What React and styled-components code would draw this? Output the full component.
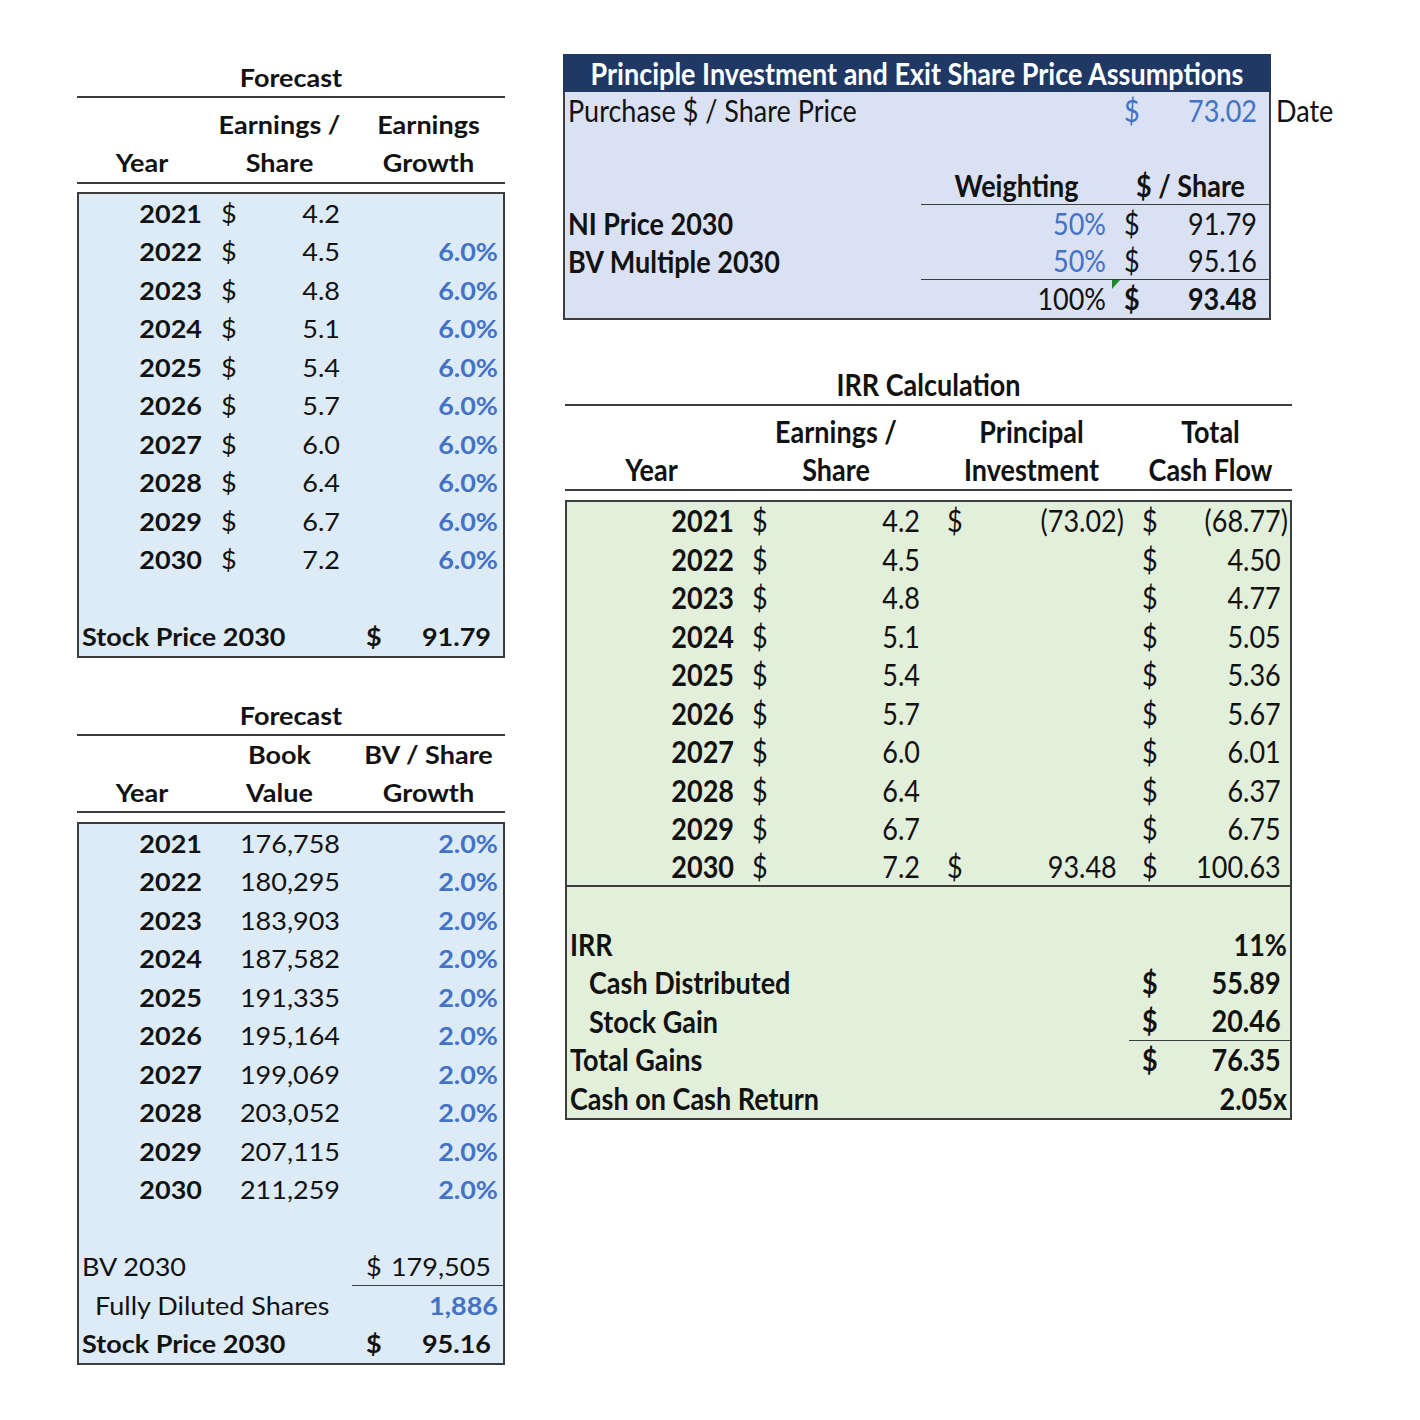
import React from 'react';
import styled, { createGlobalStyle, css } from 'styled-components';

const Global = createGlobalStyle`
  html, body { margin: 0; padding: 0; background: #ffffff; }
  body { font-family: Lato, "Open Sans", "Noto Sans", sans-serif; color: #111; }
`;

const BLUE = '#4472c4';
const INK = '#121212';
const RULE = '#3d3d3d';

const Page = styled.div`
  display: flex;
  align-items: flex-start;
  gap: 58px;
  padding: 54px 0 0 77px;
  width: 1420px;
  height: 1420px;
  box-sizing: border-box;
  font-size: 27px;
`;

const LeftCol = styled.div`
  width: 428px;
  padding-top: 4px;
  display: flex;
  flex-direction: column;
  --sy: 0.94;
`;

const RightCol = styled.div`
  display: flex;
  flex-direction: column;
  --sy: 1.12;
`;

const Ink = styled.span`
  display: inline-block;
  transform: scaleY(var(--sy, 1));
  white-space: pre;
`;

const Title = styled.div`
  height: 38px;
  display: flex;
  align-items: center;
  justify-content: center;
  font-weight: 700;
  color: ${INK};
  border-bottom: 2px solid ${RULE};
  margin-top: ${p => p.$gap || 0}px;
`;

const HeadBlock = styled.div`
  display: grid;
  grid-template-columns: ${p => p.$cols};
  padding-top: ${p => p.$pad}px;
  border-bottom: 2px solid ${RULE};
`;

const HeadCell = styled.div`
  display: flex;
  flex-direction: column;
  justify-content: flex-end;
  align-items: center;
  font-weight: 700;
  color: ${INK};
  line-height: ${p => p.$lh}px;
  height: ${p => p.$lh * 2}px;
`;

const HeadLine = styled.div`
  height: ${p => p.$lh}px;
  display: flex;
  align-items: center;
`;

const Box = styled.div`
  margin-top: ${p => p.$gap || 0}px;
  background: ${p => p.$bg};
  border: 2px solid ${RULE};
  width: ${p => p.$w}px;
  box-sizing: border-box;
  display: flex;
  flex-direction: column;
`;

const Row = styled.div`
  display: grid;
  grid-template-columns: ${p => p.$cols};
  height: ${p => p.$h || 38.5}px;
  box-sizing: border-box;
  ${p => p.$rule && css`border-bottom: 2px solid ${RULE};`}
`;

const Cell = styled.div`
  position: relative;
  display: flex;
  align-items: center;
  justify-content: ${p =>
    p.$a === 'left' ? 'flex-start' : p.$a === 'center' ? 'center' : p.$a === 'split' ? 'space-between' : 'flex-end'};
  padding: 0 ${p => p.$pr || 0}px 0 ${p => p.$pl || 0}px;
  grid-column: span ${p => p.$span || 1};
  font-weight: ${p => (p.$bold ? 700 : 400)};
  color: ${p => (p.$blue ? BLUE : INK)};
  box-sizing: border-box;
  min-width: 0;
  white-space: nowrap;
  ${p => p.$under && css`border-bottom: 1.5px solid ${RULE};`}
`;

const Paren = styled.span`
  visibility: ${p => (p.$show ? 'visible' : 'hidden')};
`;

const Flag = styled.span`
  position: absolute;
  left: 0;
  top: 0;
  width: 0;
  height: 0;
  border-top: 9px solid #1f8a2b;
  border-right: 8px solid transparent;
`;

const PanelWrap = styled.div`
  display: flex;
  align-items: flex-start;
`;

const Banner = styled.div`
  height: 38px;
  background: #203864;
  color: #ffffff;
  font-weight: 700;
  display: flex;
  align-items: center;
  justify-content: center;
  margin: -2px -2px 0;
`;

const SideNote = styled.div`
  padding-top: 38px;
  margin-left: 5px;
  height: 37.6px;
  display: flex;
  align-items: center;
  box-sizing: content-box;
  color: ${INK};
`;

const IrrWrap = styled.div`
  margin-left: 2px;
  width: 727px;
  display: flex;
  flex-direction: column;
`;

const T = ({ children }) => <Ink>{children}</Ink>;

/* ---------- data ---------- */
const years = [2021, 2022, 2023, 2024, 2025, 2026, 2027, 2028, 2029, 2030];
const eps = ['4.2', '4.5', '4.8', '5.1', '5.4', '5.7', '6.0', '6.4', '6.7', '7.2'];
const bv = ['176,758', '180,295', '183,903', '187,582', '191,335', '195,164', '199,069', '203,052', '207,115', '211,259'];
const total = ['(68.77)', '4.50', '4.77', '5.05', '5.36', '5.67', '6.01', '6.37', '6.75', '100.63'];
const principal = { 0: '(73.02)', 9: '93.48' };

const L_HEAD = '130px 145px 153px';
const L_BODY = '128px 145px 151px';
const P_COLS = '356px 191px 157px';
const I_HEAD = '173px 196px 195px 163px';
const I_BODY = '171px 196px 195px 161px';

const Acct = ({ v, bold, pl, pr, under }) => {
  const neg = v.startsWith('(');
  const num = neg ? v.slice(0, -1) : v;
  return (
    <Cell $a="split" $pl={pl} $pr={pr} $bold={bold} $under={under}>
      <T>$</T>
      <T>
        {num}
        <Paren $show={neg}>)</Paren>
      </T>
    </Cell>
  );
};

const Head = ({ cols, pad, lh, items }) => (
  <HeadBlock $cols={cols} $pad={pad}>
    {items.map((it, i) => (
      <HeadCell key={i} $lh={lh}>
        <HeadLine $lh={lh}>
          <T>{it[0]}</T>
        </HeadLine>
        <HeadLine $lh={lh}>
          <T>{it[1]}</T>
        </HeadLine>
      </HeadCell>
    ))}
  </HeadBlock>
);

const EarningsTable = () => (
  <>
    <Title>
      <T>Forecast</T>
    </Title>
    <Head cols={L_HEAD} pad={8} lh={38} items={[['', 'Year'], ['Earnings /', 'Share'], ['Earnings', 'Growth']]} />
    <Box $gap={8} $w={428} $bg="#ddebf7">
      {years.map((y, i) => (
        <Row key={y} $cols={L_BODY}>
          <Cell $bold $pr={5}>
            <T>{y}</T>
          </Cell>
          <Cell $a="split" $pl={14} $pr={12}>
            <T>$</T>
            <T>{eps[i]}</T>
          </Cell>
          <Cell $blue $bold $pr={5}>
            <T>{i === 0 ? '' : '6.0%'}</T>
          </Cell>
        </Row>
      ))}
      <Row $cols={L_BODY} />
      <Row $cols={L_BODY}>
        <Cell $a="left" $span={2} $pl={3} $bold>
          <T>Stock Price 2030</T>
        </Cell>
        <Cell $a="split" $pl={14} $pr={12} $bold>
          <T>$</T>
          <T>91.79</T>
        </Cell>
      </Row>
    </Box>
  </>
);

const BookTable = () => (
  <>
    <Title $gap={38}>
      <T>Forecast</T>
    </Title>
    <Head cols={L_HEAD} pad={0} lh={37.5} items={[['', 'Year'], ['Book', 'Value'], ['BV / Share', 'Growth']]} />
    <Box $gap={9} $w={428} $bg="#ddebf7">
      {years.map((y, i) => (
        <Row key={y} $cols={L_BODY}>
          <Cell $bold $pr={5}>
            <T>{y}</T>
          </Cell>
          <Cell $pr={12}>
            <T>{bv[i]}</T>
          </Cell>
          <Cell $blue $bold $pr={5}>
            <T>2.0%</T>
          </Cell>
        </Row>
      ))}
      <Row $cols={L_BODY} />
      <Row $cols={L_BODY}>
        <Cell $a="left" $span={2} $pl={3}>
          <T>BV 2030</T>
        </Cell>
        <Cell $a="split" $pl={14} $pr={12} $under>
          <T>$</T>
          <T>179,505</T>
        </Cell>
      </Row>
      <Row $cols={L_BODY}>
        <Cell $a="left" $span={2} $pl={16}>
          <T>Fully Diluted Shares</T>
        </Cell>
        <Cell $blue $bold $pr={5}>
          <T>1,886</T>
        </Cell>
      </Row>
      <Row $cols={L_BODY}>
        <Cell $a="left" $span={2} $pl={3} $bold>
          <T>Stock Price 2030</T>
        </Cell>
        <Cell $a="split" $pl={14} $pr={12} $bold>
          <T>$</T>
          <T>95.16</T>
        </Cell>
      </Row>
    </Box>
  </>
);

const PR = 37.6;

const AssumptionsPanel = () => (
  <PanelWrap>
    <Box $w={708} $bg="#d9e1f2">
      <Banner>
        <T>Principle Investment and Exit Share Price Assumptions</T>
      </Banner>
      <Row $cols={P_COLS} $h={PR}>
        <Cell $a="left" $pl={3}>
          <T>Purchase $ / Share Price</T>
        </Cell>
        <Cell />
        <Cell $a="split" $pl={12} $pr={12} $blue>
          <T>$</T>
          <T>73.02</T>
        </Cell>
      </Row>
      <Row $cols={P_COLS} $h={PR} />
      <Row $cols={P_COLS} $h={PR}>
        <Cell />
        <Cell $a="center" $bold $under>
          <T>Weighting</T>
        </Cell>
        <Cell $a="center" $bold $under>
          <T>$ / Share</T>
        </Cell>
      </Row>
      <Row $cols={P_COLS} $h={PR}>
        <Cell $a="left" $pl={3} $bold>
          <T>NI Price 2030</T>
        </Cell>
        <Cell $blue $pr={6}>
          <T>50%</T>
        </Cell>
        <Cell $a="split" $pl={12} $pr={12}>
          <T>$</T>
          <T>91.79</T>
        </Cell>
      </Row>
      <Row $cols={P_COLS} $h={PR}>
        <Cell $a="left" $pl={3} $bold>
          <T>BV Multiple 2030</T>
        </Cell>
        <Cell $blue $pr={6} $under>
          <T>50%</T>
        </Cell>
        <Cell $a="split" $pl={12} $pr={12} $under>
          <T>$</T>
          <T>95.16</T>
        </Cell>
      </Row>
      <Row $cols={P_COLS} $h={PR}>
        <Cell />
        <Cell $pr={6}>
          <T>100%</T>
        </Cell>
        <Cell $a="split" $pl={12} $pr={12} $bold>
          <Flag />
          <T>$</T>
          <T>93.48</T>
        </Cell>
      </Row>
    </Box>
    <SideNote>
      <T>Date</T>
    </SideNote>
  </PanelWrap>
);

const IrrTable = () => (
  <IrrWrap>
    <Title $gap={46}>
      <T>IRR Calculation</T>
    </Title>
    <Head
      cols={I_HEAD}
      pad={7}
      lh={38}
      items={[['', 'Year'], ['Earnings /', 'Share'], ['Principal', 'Investment'], ['Total', 'Cash Flow']]}
    />
    <Box $gap={9} $w={727} $bg="#e2efda">
      {years.map((y, i) => (
        <Row key={y} $cols={I_BODY} $rule={i === 9}>
          <Cell $bold $pr={4}>
            <T>{y}</T>
          </Cell>
          <Cell $a="split" $pl={14} $pr={14}>
            <T>$</T>
            <T>{eps[i]}</T>
          </Cell>
          {principal[i] ? <Acct v={principal[i]} pl={13} pr={5} /> : <Cell />}
          <Acct v={total[i]} pl={13} pr={2} />
        </Row>
      ))}
      <Row $cols={I_BODY} />
      <Row $cols={I_BODY}>
        <Cell $a="left" $span={3} $pl={3} $bold>
          <T>IRR</T>
        </Cell>
        <Cell $bold $pr={3}>
          <T>11%</T>
        </Cell>
      </Row>
      <Row $cols={I_BODY}>
        <Cell $a="left" $span={3} $pl={22} $bold>
          <T>Cash Distributed</T>
        </Cell>
        <Acct v="55.89" bold pl={13} pr={2} />
      </Row>
      <Row $cols={I_BODY}>
        <Cell $a="left" $span={3} $pl={22} $bold>
          <T>Stock Gain</T>
        </Cell>
        <Acct v="20.46" bold pl={13} pr={2} under />
      </Row>
      <Row $cols={I_BODY}>
        <Cell $a="left" $span={3} $pl={3} $bold>
          <T>Total Gains</T>
        </Cell>
        <Acct v="76.35" bold pl={13} pr={2} />
      </Row>
      <Row $cols={I_BODY}>
        <Cell $a="left" $span={3} $pl={3} $bold>
          <T>Cash on Cash Return</T>
        </Cell>
        <Cell $bold $pr={3}>
          <T>2.05x</T>
        </Cell>
      </Row>
    </Box>
  </IrrWrap>
);

export default function App() {
  return (
    <>
      <Global />
      <Page>
        <LeftCol>
          <EarningsTable />
          <BookTable />
        </LeftCol>
        <RightCol>
          <AssumptionsPanel />
          <IrrTable />
        </RightCol>
      </Page>
    </>
  );
}
